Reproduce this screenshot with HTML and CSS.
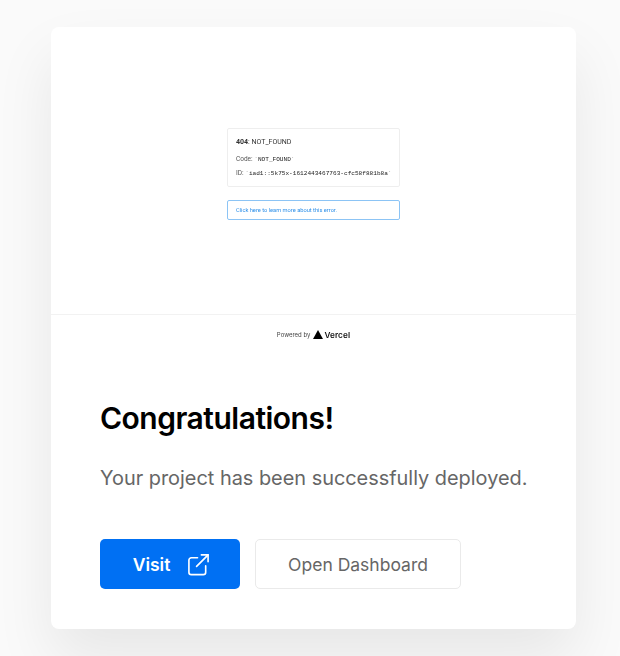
FILE: index.html
```html
<!DOCTYPE html>
<html lang="en">
<head>
  <meta charset="UTF-8" />
  <title>Congratulations!</title>
  <link rel="stylesheet" href="styles.css">
</head>
<body>
  <div class="card">
    <div class="preview">
      <div class="preview-main">
        <div class="error-box">
          <p class="error-title"><b>404</b>: NOT_FOUND</p>
          <p class="error-line">Code: <code>`NOT_FOUND`</code></p>
          <p class="error-line">ID: <code>`iad1::5k75x-1612443467763-cfc58f881b8a`</code></p>
        </div>
        <div class="error-link">Click here to learn more about this error.</div>
      </div>
      <div class="preview-footer">
        <span class="powered">Powered by</span>
        <svg class="vercel-mark" viewBox="0 0 10 9" width="10" height="9"><path d="M5 0l5 9H0z" fill="#000"/></svg>
        <span class="vercel-name">Vercel</span>
      </div>
    </div>
    <div class="content">
      <h1>Congratulations!</h1>
      <p class="lead">Your project has been successfully deployed.</p>
      <div class="actions">
        <a class="btn btn-primary" href="#">
          Visit
          <svg viewBox="0 0 24 24" width="23" height="23" fill="none" stroke="#fff" stroke-width="1.7" stroke-linecap="round" stroke-linejoin="round">
            <path d="M11 5H4.5A2.5 2.5 0 0 0 2 7.500V20a2.500 2.500 0 0 0 2.500 2.500H17a2.500 2.500 0 0 0 2.500-2.500V13.500"/>
            <path d="M10 14L22 2"/>
            <path d="M15 2h7v7"/>
          </svg>
        </a>
        <a class="btn btn-secondary" href="#">Open Dashboard</a>
      </div>
    </div>
  </div>
</body>
</html>
```

FILE: styles.css
```css
* {
  box-sizing: border-box;
}

html, body {
  height: 100%;
}

body {
  margin: 0;
  padding: 27px 44px 27px 51px;
  background: #fafafa;
  font-family: Inter, 'Liberation Sans', sans-serif;
  overflow: hidden;
}

.card {
  width: 525px;
  height: 602px;
  background: #fff;
  border-radius: 8px;
  box-shadow: 0 30px 60px rgba(0, 0, 0, 0.08);
  overflow: hidden;
}

.preview {
  height: 320px;
}

.preview-main {
  height: 288px;
  padding-top: 101px;
  border-bottom: 1px solid #f2f2f2;
  display: flex;
  flex-direction: column;
  align-items: center;
  filter: blur(0.4px);
}

.error-box {
  width: 173px;
  height: 59px;
  padding: 9px 8px;
  border: 1px solid #eee;
  border-radius: 2px;
  font-family: Roboto, 'Liberation Sans', sans-serif;
  color: #333;
}

.error-title {
  margin: 0 0 8px;
  font-size: 7px;
  line-height: 9px;
}

.error-line {
  margin: 0 0 5px;
  font-size: 6.500px;
  line-height: 9px;
  color: #555;
  white-space: nowrap;
}

.error-line code {
  font-family: 'Liberation Mono', monospace;
  font-size: 6.100px;
  color: #222;
}

.error-link {
  width: 173px;
  height: 20px;
  margin-top: 13px;
  padding-left: 8px;
  border: 1px solid #8cc4f5;
  border-radius: 2px;
  font-family: Roboto, 'Liberation Sans', sans-serif;
  font-size: 5.700px;
  line-height: 18px;
  color: #2d8fe8;
}

.preview-footer {
  height: 32px;
  padding-top: 7px;
  display: flex;
  align-items: center;
  justify-content: center;
  filter: blur(0.3px);
}

.powered {
  font-size: 6px;
  color: #444;
  margin-right: 3px;
}

.vercel-mark {
  margin-right: 1px;
}

.vercel-name {
  font-size: 8.200px;
  font-weight: 600;
  letter-spacing: 0.1px;
  color: #111;
}

.content {
  padding: 0 40px 0 49px;
}

h1 {
  margin: 51px 0 0;
  font-size: 30px;
  line-height: 40px;
  font-weight: 600;
  letter-spacing: -0.5px;
  color: #000;
}

.lead {
  margin: 25px 0 0;
  font-size: 19.900px;
  line-height: 30px;
  color: #666;
  white-space: nowrap;
}

.actions {
  display: flex;
  gap: 15px;
  margin-top: 46px;
}

.btn {
  display: flex;
  align-items: center;
  justify-content: center;
  height: 50px;
  border-radius: 5px;
  font-size: 17.500px;
  text-decoration: none;
}

.btn-primary {
  width: 140px;
  gap: 17px;
  padding-left: 3px;
  background: #0070f3;
  color: #fff;
  font-weight: 600;
}

.btn-secondary {
  width: 206px;
  border: 1px solid #eaeaea;
  background: #fff;
  color: #666;
  font-weight: 400;
}
```
